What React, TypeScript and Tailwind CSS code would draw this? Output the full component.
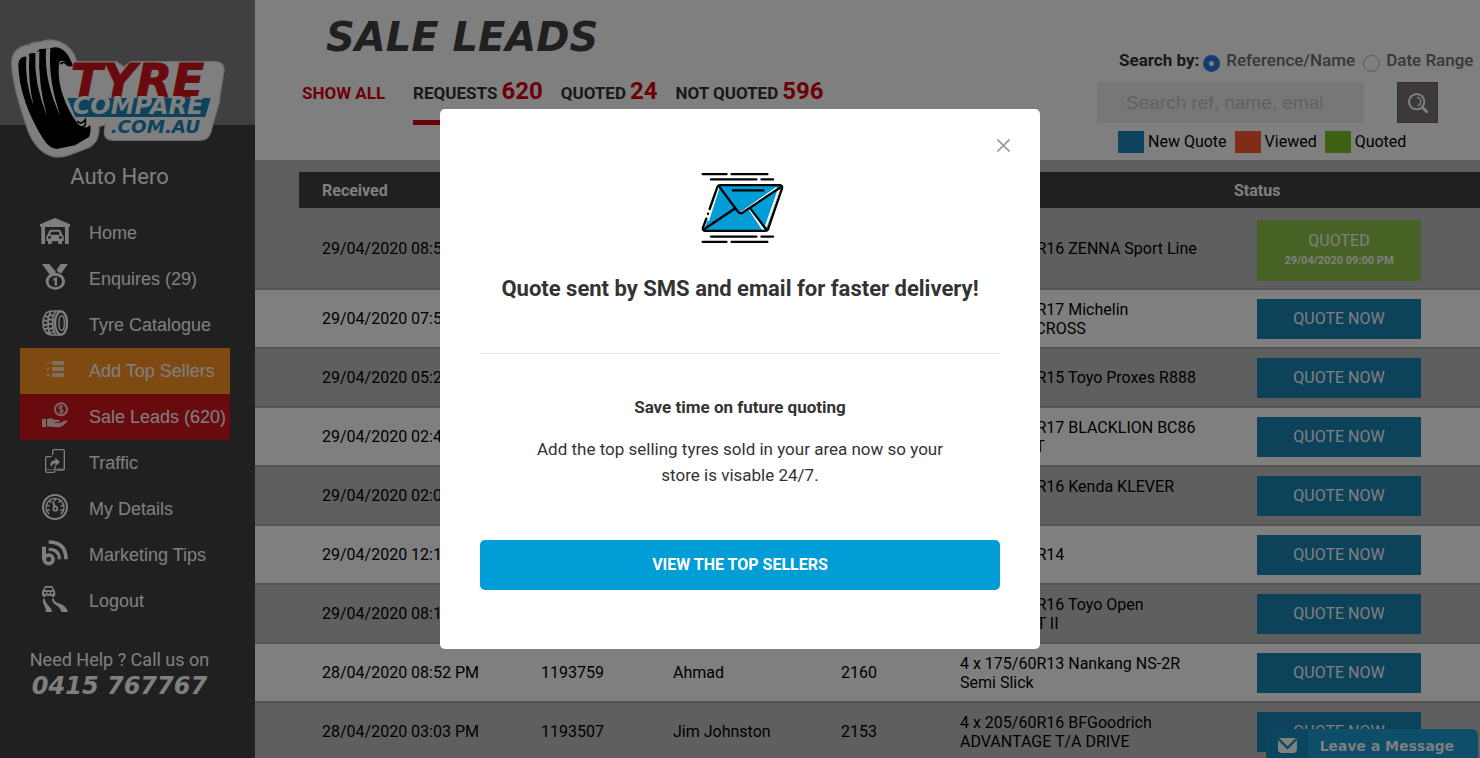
import { useState } from "react";
import type { ReactNode } from "react";

interface Lead {
  received: string;
  reference: string;
  name: string;
  postcode: string;
  tyre: string[];
  quotedAt?: string;
}

interface MenuItem {
  label: string;
  icon: ReactNode;
  className?: string;
}

const leads: Lead[] = [
  { received: "29/04/2020 08:57 PM", reference: "1194310", name: "Daniel", postcode: "2170", tyre: ["4 x 205/55R16 ZENNA Sport Line"], quotedAt: "29/04/2020 09:00 PM" },
  { received: "29/04/2020 07:52 PM", reference: "1194287", name: "Peter", postcode: "2145", tyre: ["4 x 225/65R17 Michelin", "LATITUDE CROSS"] },
  { received: "29/04/2020 05:24 PM", reference: "1194205", name: "Michael", postcode: "2200", tyre: ["4 x 195/50R15 Toyo Proxes R888"] },
  { received: "29/04/2020 02:43 PM", reference: "1194122", name: "Steve", postcode: "2164", tyre: ["4 x 265/65R17 BLACKLION BC86", "Voracio A/T"] },
  { received: "29/04/2020 02:07 PM", reference: "1194098", name: "Chris", postcode: "2150", tyre: ["4 x 245/70R16 Kenda KLEVER", "H/T"] },
  { received: "29/04/2020 12:18 PM", reference: "1194031", name: "Sam", postcode: "2166", tyre: ["4 x 185/65R14"] },
  { received: "29/04/2020 08:12 AM", reference: "1193904", name: "Robert", postcode: "2148", tyre: ["4 x 265/75R16 Toyo Open", "Country A/T II"] },
  { received: "28/04/2020 08:52 PM", reference: "1193759", name: "Ahmad", postcode: "2160", tyre: ["4 x 175/60R13 Nankang NS-2R", "Semi Slick"] },
  { received: "28/04/2020 03:03 PM", reference: "1193507", name: "Jim Johnston", postcode: "2153", tyre: ["4 x 205/60R16 BFGoodrich", "ADVANTAGE T/A DRIVE"] },
];

const filters = [
  { label: "REQUESTS", count: 620, active: true },
  { label: "QUOTED", count: 24, active: false },
  { label: "NOT QUOTED", count: 596, active: false },
];

const menu: MenuItem[] = [
  {
    label: "Home",
    icon: (
      <svg viewBox="0 0 90 78" className="w-[30px] h-[26px]" fill="currentColor">
        <path d="M45 0 90 19v7H86v52H75V27H15v51H4V26H0V19Z" />
        <path fillRule="evenodd" d="M33 35h24q4 0 6 5l4 10q4 2 4 7v12h-5v9H55v-8H35v8H24v-9h-5V57q0-5 4-7l4-10q2-5 6-5Zm1 6-4 9h30l-4-9ZM29 54a5 4 0 1 0 .1 0Zm32 0a5 4 0 1 0 .1 0Z" />
      </svg>
    ),
  },
  {
    label: "Enquires (29)",
    icon: (
      <svg viewBox="0 0 78 78" className="size-[26px]" fill="currentColor">
        <path d="M0 0h22l20 24-4 5q-8 0-14 4Z" />
        <path d="M56 0h22L58 28l-10-3-4-8Z" />
        <path fillRule="evenodd" d="M40 27a29 25 0 1 0 .1 0Zm0 8a20 17.500 0 1 1-.1 0Z" />
        <path d="M33 45l8-5h4v25h-7V48l-5 2Z" />
      </svg>
    ),
  },
  {
    label: "Tyre Catalogue",
    icon: (
      <svg viewBox="0 0 78 78" className="size-[26px]" fill="none" stroke="currentColor">
        <path d="M55 3H30C12 3 3 18 3 39s9 36 27 36h25" strokeWidth="5" />
        <ellipse cx="57" cy="39" rx="18" ry="35" strokeWidth="7" />
        <ellipse cx="59" cy="39" rx="8" ry="22" strokeWidth="4" />
        <path d="M27 4C15 20 15 58 27 74M41 4C29 20 29 58 41 74" strokeWidth="5" />
        <path d="M8 18l12 3M24 15l12 3M4 31l12 2M20 28l14 2M4 45l12-1M19 42l13-1M7 58l12-3M22 57l13-3M13 69l10-3M28 68l10-3" strokeWidth="6" />
      </svg>
    ),
  },
  {
    label: "Add Top Sellers",
    className: "bg-[#fd9424]",
    icon: (
      <svg viewBox="0 0 54 48" className="w-[18px] h-4 text-white/70" fill="currentColor">
        <path d="M18 0h36v12H18zM18 18h36v12H18zM18 36h36v12H18zM2 38h7v7H2z" />
        <path d="M0 6l4 4 8-9M0 24l4 4 8-9" fill="none" stroke="currentColor" strokeWidth="3" />
      </svg>
    ),
  },
  {
    label: "Sale Leads (620)",
    className: "bg-[#d2141d]",
    icon: (
      <svg viewBox="0 0 78 78" className="size-[26px] text-white/80" fill="currentColor">
        <circle cx="57" cy="22" r="18" fill="none" stroke="currentColor" strokeWidth="6" />
        <path d="M63 15q-11-6-12 1 0 5 7 6 6 2 5 6-2 6-12 1M57 9v26" fill="none" stroke="currentColor" strokeWidth="4" />
        <path d="M0 52l12-2v25H0ZM15 51q12-6 22 2h12q6 1 4 6l-15 2v2l18-1q12-8 22-6-10 12-20 18-12 4-43-1Z" />
      </svg>
    ),
  },
  {
    label: "Traffic",
    icon: (
      <svg viewBox="0 0 60 72" className="w-5 h-6" fill="none" stroke="currentColor" strokeWidth="4">
        <path d="M23 18V6q0-4 4-4h27q4 0 4 4v53q0 4-4 4H34M20 23H5q-3 0-3 4v38q0 5 4 5h19q5 0 5-5V52" />
        <path d="M16 50q0-16 15-16v-8l14 13-14 13v-9q-9 0-10 9Z" fill="currentColor" stroke="none" />
        <path d="M34 60h24M2 62h26" strokeWidth="2" />
      </svg>
    ),
  },
  {
    label: "My Details",
    icon: (
      <svg viewBox="0 0 78 78" className="size-[26px]" fill="none" stroke="currentColor">
        <circle cx="39" cy="39" r="36" strokeWidth="6" />
        <path d="M22 61A27 27 0 1 1 56 61" strokeWidth="4" />
        <path d="M39 12v9M22 18l5 8M13 34l9 2M14 50l9-3M56 18l-5 8M65 34l-9 2M64 50l-9-3" strokeWidth="5" />
        <circle cx="40" cy="44" r="6" strokeWidth="5" />
        <path d="M33 22l5 17" strokeWidth="6" />
      </svg>
    ),
  },
  {
    label: "Marketing Tips",
    icon: (
      <svg viewBox="0 0 78 78" className="size-[26px]" fill="none" stroke="currentColor">
        <circle cx="20" cy="58" r="13" strokeWidth="11" />
        <path d="M6 20v38" strokeWidth="12" />
        <path d="M20 28q32 0 32 30" strokeWidth="9" />
        <path d="M20 6q52 0 52 52" strokeWidth="11" />
      </svg>
    ),
  },
  {
    label: "Logout",
    icon: (
      <svg viewBox="0 0 78 78" className="size-[26px]" fill="currentColor">
        <path fillRule="evenodd" d="M9 0h22l6 12q3 2 3 8v9h-4v5h-6v-5H10v5H4v-5H0V18q0-4 3-6Zm2 5-3 8h24l-3-8ZM6 18v5h7v-5Zm21 0v5h7v-5ZM16 18v5h8v-5Z" />
        <path d="M3 38h5q2 12 9 18 12 10 14 22H12Q12 66 6 57 1 48 3 38ZM30 38h6q0 9 14 14 22 6 28 26H58Q56 66 42 57 30 50 30 38Z" />
      </svg>
    ),
  },
];

const legend = [
  { label: "New Quote", color: "bg-[#1a86b8]" },
  { label: "Viewed", color: "bg-[#ff5a33]" },
  { label: "Quoted", color: "bg-[#7fc324]" },
];

function Logo() {
  return (
    <svg viewBox="30 52 645 363" className="w-[215px] h-[121px]" role="img" aria-label="Tyre Compare">
      <path
        d="M35 125C36 90 62 75 88 73Q100 62 122 64C150 50 212 58 230 123H350L371 139 391 123H648Q673 125 672 150L660 225 659 240 632 335Q626 359 597 359H340Q312 358 313 335L316 312 297 318C297 352 288 372 258 384L204 404Q165 417 133 396 104 378 86 335 35 190 35 125Z"
        fill="#ffffff"
        stroke="#dcdcdc"
        strokeWidth="4"
      />
      <path
        d="M55 133C56 114 67 106 82 108L90 98 107 97 119 85 137 84 152 83C178 72 205 92 219 136L206 138C199 122 187 116 178 124 168 185 195 262 239 316Q262 326 271 312 274 330 268 348L225 374 170 385Q148 384 128 352C86 285 56 205 55 133Z"
        fill="#000000"
      />
      <path d="M79 107Q73 180 101 257 83 180 88 103ZM106 97Q101 190 141 285 113 190 118 90ZM138 84Q132 185 181 285 144 180 151 83Z" fill="#ffffff" />
      <path d="M181 131q10-13 22 4M232 301q10 14 24-4v16q-9 12-20 2" fill="none" stroke="#000000" strokeWidth="5" />
      <path d="M202 232H632L616 289H226Z" fill="#1a86b8" />
      <g fontFamily="DejaVu Sans" fontWeight="bold" fontStyle="italic">
        <text x="212" y="229" fontSize="140" fill="#d2141d" stroke="#d2141d" strokeWidth="3">TYRE</text>
        <text x="218" y="281" fontSize="72" fill="#ffffff">COMPARE</text>
        <text x="332" y="336" fontSize="55" fill="#1a86b8">.COM.AU</text>
      </g>
    </svg>
  );
}

function EnvelopeIcon() {
  return (
    <svg viewBox="184 336 250 216" className="w-[83px] h-[72px]" fill="none" stroke="#000000" strokeWidth="7" strokeLinecap="round" strokeLinejoin="round">
      <path d="M240 376 425 376 381 513 193 510Z" fill="#009dd7" stroke="none" />
      <path d="M236 385 206 480M417 392 380 498M330 447 371 509M308 456 410 385" stroke="#ffffff" strokeWidth="6" />
      <path d="M189 342h72M276 342h108M214 358h137M366 358h35M214 530h137M366 530h35M189 546h72M276 546h108M280 391h92" />
      <path d="M210 447 234 379Q236 375 242 375H422Q430 376 428 385L386 508Q384 513 377 513H196Q188 512 190 503L200 476M205 461v1" />
      <path d="M238 378 296 456Q303 463 311 457L426 380M192 509 285 446M332 445 381 509" />
    </svg>
  );
}

function Sidebar() {
  return (
    <aside className="w-[255px] shrink-0 bg-[#404040] text-white">
      <div className="h-[125px] bg-[#808080] pl-2.5 pt-[38px]">
        <Logo />
      </div>
      <p className="mt-[34px] pr-4 text-center font-[Roboto,sans-serif] text-[22px] leading-9">Auto Hero</p>
      <nav className="mt-[15px] ml-5 w-[210px] font-['Liberation_Sans',sans-serif] text-lg">
        {menu.map((item) => (
          <a key={item.label} href="#" className={`flex h-[46px] items-center whitespace-nowrap ${item.className ?? ""}`}>
            <span className="flex w-[69px] justify-center pb-1">{item.icon}</span>
            {item.label}
          </a>
        ))}
      </nav>
      <div className="mt-6 pr-4 text-center">
        <p className="font-[Roboto,sans-serif] text-lg leading-6">Need Help ? Call us on</p>
        <p className="font-['DejaVu_Sans',sans-serif] text-2xl leading-7 font-bold italic">0415 767767</p>
      </div>
    </aside>
  );
}

function SearchPanel() {
  return (
    <form className="w-[375px] shrink-0 pt-[49px]" onSubmit={(e) => e.preventDefault()}>
      <fieldset className="flex h-6 items-center pl-[22px] text-[17px] font-medium whitespace-nowrap text-[#707070]">
        <span className="font-bold text-[#303030]">Search by:</span>
        <input
          id="by-reference"
          type="radio"
          name="searchBy"
          defaultChecked
          className="mt-1 ml-1 size-[17px] appearance-none rounded-full border border-[#9a9a9a] checked:border-[6px] checked:border-[#2d7be0]"
        />
        <label htmlFor="by-reference" className="ml-1.5">Reference/Name</label>
        <input
          id="by-date"
          type="radio"
          name="searchBy"
          className="mt-1 ml-2 size-[17px] appearance-none rounded-full border border-[#b0b0b0] checked:border-[6px] checked:border-[#2d7be0]"
        />
        <label htmlFor="by-date" className="ml-1.5">Date Range</label>
      </fieldset>
      <div className="mt-[9px] flex">
        <input
          type="text"
          aria-label="Search"
          placeholder="Search ref, name, emai"
          className="h-[41px] w-[267px] bg-[#eeeeee] pr-2 pl-[29px] font-['Liberation_Sans',sans-serif] text-[19px] outline-none placeholder:text-[#c4c4c4]"
        />
        <button type="submit" aria-label="Search" className="ml-[33px] flex size-[41px] items-center justify-center border border-[#66625e] bg-[#787270]">
          <svg viewBox="0 0 60 60" className="size-5" fill="none" stroke="#ffffff" strokeLinecap="round">
            <circle cx="26" cy="26" r="23" strokeWidth="6" />
            <path d="M28 13a13 13 0 0 1 2 25" strokeWidth="4" />
            <path d="M45 45l11 11" strokeWidth="9" />
          </svg>
        </button>
      </div>
      <ul className="mt-2 flex gap-2 pl-[21px] text-base text-black">
        {legend.map((item) => (
          <li key={item.label} className="flex h-[22px] items-center gap-1">
            <span className={`h-[22px] w-[26px] ${item.color}`} />
            <span className="leading-5">{item.label}</span>
          </li>
        ))}
      </ul>
    </form>
  );
}

function LeadsTable() {
  return (
    <table className="w-full table-fixed border-collapse text-left text-base leading-[19px] text-black">
      <colgroup>
        <col className="w-11" />
        <col className="w-[219px]" />
        <col className="w-[132px]" />
        <col className="w-[168px]" />
        <col className="w-[119px]" />
        <col className="w-[297px]" />
        <col />
      </colgroup>
      <thead>
        <tr className="h-9 text-white">
          <td />
          <th className="bg-[#404040] pl-[23px]">Received</th>
          <th className="bg-[#404040] pl-[23px]">Reference</th>
          <th className="bg-[#404040] pl-[23px]">Name</th>
          <th className="bg-[#404040] pl-[23px]">Postcode</th>
          <th className="bg-[#404040] pl-[23px]">Tyre</th>
          <th className="bg-[#404040]">Status</th>
        </tr>
      </thead>
      <tbody>
        {leads.map((lead) => (
          <tr key={lead.reference} className="h-[59px] border-b-2 border-[#aba6a6] odd:bg-[#bebebe] even:bg-white">
            <td />
            <td className="pl-[23px] whitespace-nowrap">{lead.received}</td>
            <td className="pl-[23px]">{lead.reference}</td>
            <td className="pl-[23px]">{lead.name}</td>
            <td className="pl-[23px]">{lead.postcode}</td>
            <td className="pl-[23px]">
              {lead.tyre.map((line) => (
                <div key={line}>{line}</div>
              ))}
            </td>
            <td className="pl-[23px]">
              {lead.quotedAt ? (
                <button className="mt-3 mb-[7px] block h-[61px] w-[164px] bg-[#8ec448] text-white">
                  <span className="block leading-5">QUOTED</span>
                  <span className="block text-[11px] leading-5 font-bold">{lead.quotedAt}</span>
                </button>
              ) : (
                <button className="block h-10 w-[164px] bg-[#1884b4] text-white">QUOTE NOW</button>
              )}
            </td>
          </tr>
        ))}
      </tbody>
    </table>
  );
}

function SentModal({ onClose }: { onClose: () => void }) {
  return (
    <div className="fixed inset-0 z-50 flex items-center justify-center bg-black/50">
      <div role="dialog" aria-modal="true" className="relative flex w-[600px] flex-col items-center rounded-[5px] bg-white px-10 pt-[63px] pb-[59px] text-center text-[#333333]">
        <button onClick={onClose} aria-label="Close" className="absolute top-[30px] right-[30px] text-[#999999]">
          <svg viewBox="0 0 13 13" className="size-[13px]" stroke="currentColor" strokeWidth="1.6">
            <path d="M0.500 0.500l12 12M12.500 0.500l-12 12" />
          </svg>
        </button>
        <div className="pl-[5px]">
          <EnvelopeIcon />
        </div>
        <h2 className="mt-[29px] text-[22px] leading-8 font-bold whitespace-nowrap">Quote sent by SMS and email for faster delivery!</h2>
        <hr className="mt-12 w-full border-[#e5e5e5]" />
        <h3 className="mt-10 text-[17px] leading-[26px] font-bold">Save time on future quoting</h3>
        <p className="mt-4 w-[440px] text-[17px] leading-[26px]">
          Add the top selling tyres sold in your area now so your store is visable 24/7.
        </p>
        <button className="mt-[52px] h-[50px] w-full rounded-[5px] bg-[#009dd7] text-base font-bold text-white">
          VIEW THE TOP SELLERS
        </button>
      </div>
    </div>
  );
}

export default function App() {
  const [showModal, setShowModal] = useState(true);

  return (
    <div className="flex h-screen overflow-hidden bg-white font-[Roboto,sans-serif]">
      <Sidebar />

      <main className="min-w-0 flex-1 bg-[#bebebe]">
        <header className="flex h-[160px] justify-between bg-white pr-2">
          <div className="pt-[15px] pl-[47px]">
            <h1 className="pl-6 font-['DejaVu_Sans',sans-serif] text-[40px] leading-[44px] font-bold whitespace-nowrap text-[#404040] italic">SALE LEADS</h1>
            <div className="mt-3 flex text-[17px] font-bold whitespace-nowrap text-[#303030]">
              <a href="#" className="mr-7 pt-2 leading-7 text-[#d8000f]">SHOW ALL</a>
              {filters.map((filter) => (
                <a
                  key={filter.label}
                  href="#"
                  className={`mr-[18px] flex h-[54px] items-baseline gap-1 border-b-[5px] ${filter.active ? "border-[#d8000f]" : "border-transparent"}`}
                >
                  {filter.label}
                  <span className="text-2xl leading-10 text-[#d8000f]">{filter.count}</span>
                </a>
              ))}
            </div>
          </div>
          <SearchPanel />
        </header>

        <div className="pt-3">
          <LeadsTable />
        </div>
      </main>

      {/* Chat tab */}
      <button className="fixed right-0.5 bottom-0 flex h-[29px] w-[212px] items-center overflow-hidden rounded-t-md bg-[#1c9cd2] font-['DejaVu_Sans',sans-serif] text-sm font-bold text-white">
        <span className="flex h-full w-[42px] items-center justify-center bg-[#168cc0] pt-1">
          <svg viewBox="0 0 56 44" className="h-[15px] w-[19px]" fill="currentColor">
            <path d="M3 0h50L28 24ZM0 6l28 28L56 6v26q0 12-12 12H12Q0 44 0 32Z" />
          </svg>
        </span>
        <span className="flex-1 pt-1 pr-3 text-center whitespace-nowrap">Leave a Message</span>
      </button>

      {showModal && <SentModal onClose={() => setShowModal(false)} />}
    </div>
  );
}
